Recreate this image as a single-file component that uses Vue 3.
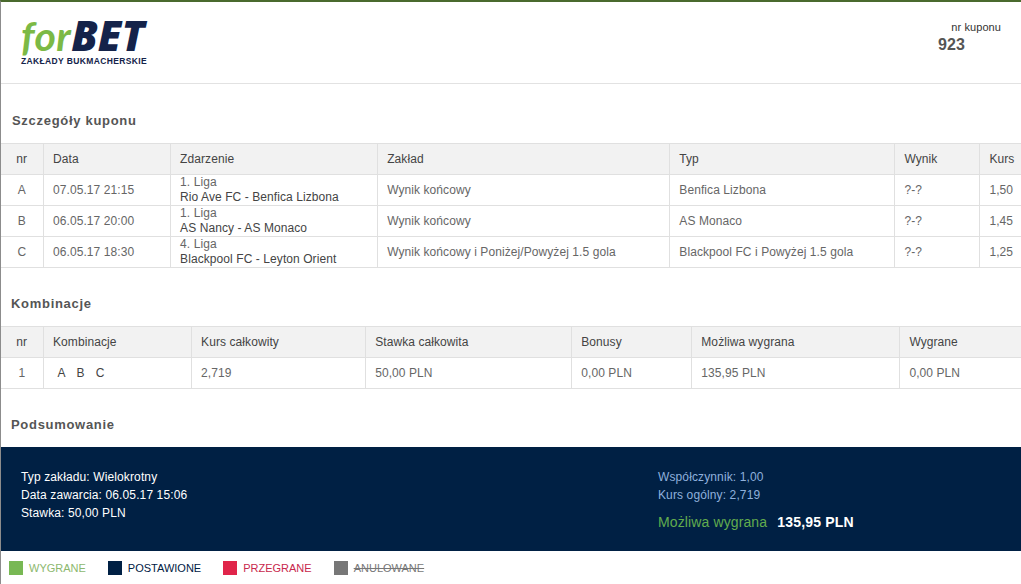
<script setup>
const bets = [
  { nr: 'A', date: '07.05.17 21:15', league: '1. Liga', event: 'Rio Ave FC - Benfica Lizbona', bet: 'Wynik końcowy', type: 'Benfica Lizbona', odds: '1,50' },
  { nr: 'B', date: '06.05.17 20:00', league: '1. Liga', event: 'AS Nancy - AS Monaco', bet: 'Wynik końcowy', type: 'AS Monaco', odds: '1,45' },
  { nr: 'C', date: '06.05.17 18:30', league: '4. Liga', event: 'Blackpool FC - Leyton Orient', bet: 'Wynik końcowy i Poniżej/Powyżej 1.5 gola', type: 'Blackpool FC i Powyżej 1.5 gola', odds: '1,25' }
]
const betCols = [42, 127, 207, 292, 225, 85, 42]
const comboCols = [42, 148, 174, 206, 120, 208, 122]
const legend = [
  { label: 'WYGRANE', cls: 'win' },
  { label: 'POSTAWIONE', cls: 'placed' },
  { label: 'PRZEGRANE', cls: 'lost' },
  { label: 'ANULOWANE', cls: 'void' }
]
</script>

<template>
  <div class="page">
    <header class="head">
      <div class="logo">
        <div class="mark"><span class="for">for</span><span class="bet">BET</span></div>
        <div class="tag">ZAKŁADY BUKMACHERSKIE</div>
      </div>
      <div class="coupon">
        <div class="coupon-label">nr kuponu</div>
        <div class="coupon-nr">923</div>
      </div>
    </header>

    <h2 class="title first">Szczegóły kuponu</h2>
    <table class="grid bets">
      <colgroup><col v-for="(w, i) in betCols" :key="i" :style="{ width: w + 'px' }" /></colgroup>
      <thead>
        <tr><th class="c">nr</th><th>Data</th><th>Zdarzenie</th><th>Zakład</th><th>Typ</th><th>Wynik</th><th>Kurs</th></tr>
      </thead>
      <tbody>
        <tr v-for="b in bets" :key="b.nr">
          <td class="c">{{ b.nr }}</td>
          <td>{{ b.date }}</td>
          <td class="event"><div>{{ b.league }}</div><div class="dark">{{ b.event }}</div></td>
          <td>{{ b.bet }}</td>
          <td>{{ b.type }}</td>
          <td>?-?</td>
          <td>{{ b.odds }}</td>
        </tr>
      </tbody>
    </table>

    <h2 class="title second">Kombinacje</h2>
    <table class="grid combos">
      <colgroup><col v-for="(w, i) in comboCols" :key="i" :style="{ width: w + 'px' }" /></colgroup>
      <thead>
        <tr><th class="c">nr</th><th>Kombinacje</th><th>Kurs całkowity</th><th>Stawka całkowita</th><th>Bonusy</th><th>Możliwa wygrana</th><th>Wygrane</th></tr>
      </thead>
      <tbody>
        <tr>
          <td class="c">1</td>
          <td class="letters"><span>A</span><span>B</span><span>C</span></td>
          <td>2,719</td><td>50,00 PLN</td><td>0,00 PLN</td><td>135,95 PLN</td><td>0,00 PLN</td>
        </tr>
      </tbody>
    </table>

    <h2 class="title third">Podsumowanie</h2>
    <section class="summary">
      <div class="sum-left">
        <div>Typ zakładu: Wielokrotny</div>
        <div>Data zawarcia: 06.05.17 15:06</div>
        <div>Stawka: 50,00 PLN</div>
      </div>
      <div class="sum-right">
        <div>Współczynnik: 1,00</div>
        <div>Kurs ogólny: 2,719</div>
        <div class="possible"><span class="pl">Możliwa wygrana</span><span class="pv">135,95 PLN</span></div>
      </div>
    </section>

    <footer class="legend">
      <div v-for="l in legend" :key="l.label" class="item" :class="l.cls">
        <span class="sq"></span><span class="lbl">{{ l.label }}</span>
      </div>
    </footer>
  </div>
</template>

<style>
html, body { margin: 0; background: #fff; overflow: hidden; }
</style>

<style scoped>
.page {
  width: 1021px;
  height: 584px;
  box-sizing: border-box;
  border-top: 2px solid #4a6a2e;
  border-left: 1px solid #8c8c8c;
  font-family: "Liberation Sans", Arial, sans-serif;
  font-size: 12px;
  letter-spacing: 0.08px;
  color: #555;
  background: #fff;
  overflow: hidden;
}
.head {
  height: 82px;
  box-sizing: border-box;
  border-bottom: 1px solid #e2e2e2;
  display: flex;
  justify-content: space-between;
  padding: 15px 20px 0 20px;
}
.logo { width: 128px; }
.mark {
  font-style: italic;
  line-height: 36px;
  height: 36px;
  white-space: nowrap;
  display: flex;
  align-items: baseline;
}
.for { color: #7cb945; font-size: 41px; font-weight: 700; letter-spacing: 0.4px; font-family: Lato, sans-serif; }
.bet { color: #14234a; font-size: 42px; font-weight: 800; letter-spacing: 0; font-family: "Open Sans", sans-serif; }
.tag {
  color: #14234a;
  font-size: 8.5px;
  font-weight: 700;
  letter-spacing: 0.36px;
  line-height: 10px;
  margin-top: 3px;
  white-space: nowrap;
}
.coupon { width: 63px; margin-top: 4px; }
.coupon-label { font-size: 11px; color: #333; text-align: right; line-height: 13px; }
.coupon-nr { font-size: 16px; font-weight: 700; color: #555; line-height: 18px; margin-top: 2px; }
.title {
  margin: 0;
  font-size: 13px;
  font-weight: 700;
  color: #555;
  letter-spacing: 0.7px;
  line-height: 16px;
  padding-left: 11px;
}
.first { padding-top: 29px; padding-bottom: 14px; }
.second { padding-left: 10px; padding-top: 28px; padding-bottom: 14px; }
.third { padding-left: 10px; padding-top: 28px; padding-bottom: 14px; }
.grid {
  table-layout: fixed;
  border-collapse: collapse;
  border-top: 1px solid #e0e0e0;
}
.grid th {
  background: #f2f2f2;
  font-weight: 400;
  color: #444;
  text-align: left;
  height: 30px;
  padding: 0 0 0 9.5px;
  border-right: 1px solid #e0e0e0;
  border-bottom: 1px solid #e0e0e0;
  white-space: nowrap;
}
.grid td {
  height: 30px;
  padding: 0 0 0 9.5px;
  border-right: 1px solid #e0e0e0;
  border-bottom: 1px solid #e0e0e0;
  white-space: nowrap;
  line-height: 15px;
  color: #666;
}
.grid .c { padding: 0; text-align: center; }
.bets, .combos { width: 1021px; }
.event .dark { color: #444; }
.grid .letters { color: #444; padding-left: 14px; }
.letters span { margin-right: 11px; }
.summary {
  height: 104px;
  margin-left: -1px;
  background: #002044;
  display: flex;
  box-sizing: border-box;
  padding-top: 21px;
  line-height: 18px;
}
.sum-left { width: 658px; padding-left: 21px; box-sizing: border-box; color: #fff; letter-spacing: 0.12px; }
.sum-right { color: #8fb0dc; letter-spacing: 0.12px; }
.possible { margin-top: 7px; line-height: 22px; white-space: nowrap; }
.pl { color: #62ac4e; font-size: 14px; letter-spacing: 0.12px; }
.pv { color: #fff; font-size: 14px; font-weight: 700; margin-left: 10px; letter-spacing: 0.2px; }
.legend {
  display: flex;
  align-items: center;
  height: 33px;
  padding-left: 8px;
  font-size: 11px;
  letter-spacing: 0;
}
.item { display: flex; align-items: center; margin-right: 22px; }
.sq { width: 14px; height: 14px; margin-right: 6px; }
.win .sq { background: #78b854; }
.win .lbl { color: #8cb86e; }
.placed .sq { background: #002044; }
.placed .lbl { color: #002044; }
.lost .sq { background: #e0254a; }
.lost .lbl { color: #c8284c; }
.void .sq { background: #777; }
.void .lbl { color: #777; text-decoration: line-through; }
</style>
